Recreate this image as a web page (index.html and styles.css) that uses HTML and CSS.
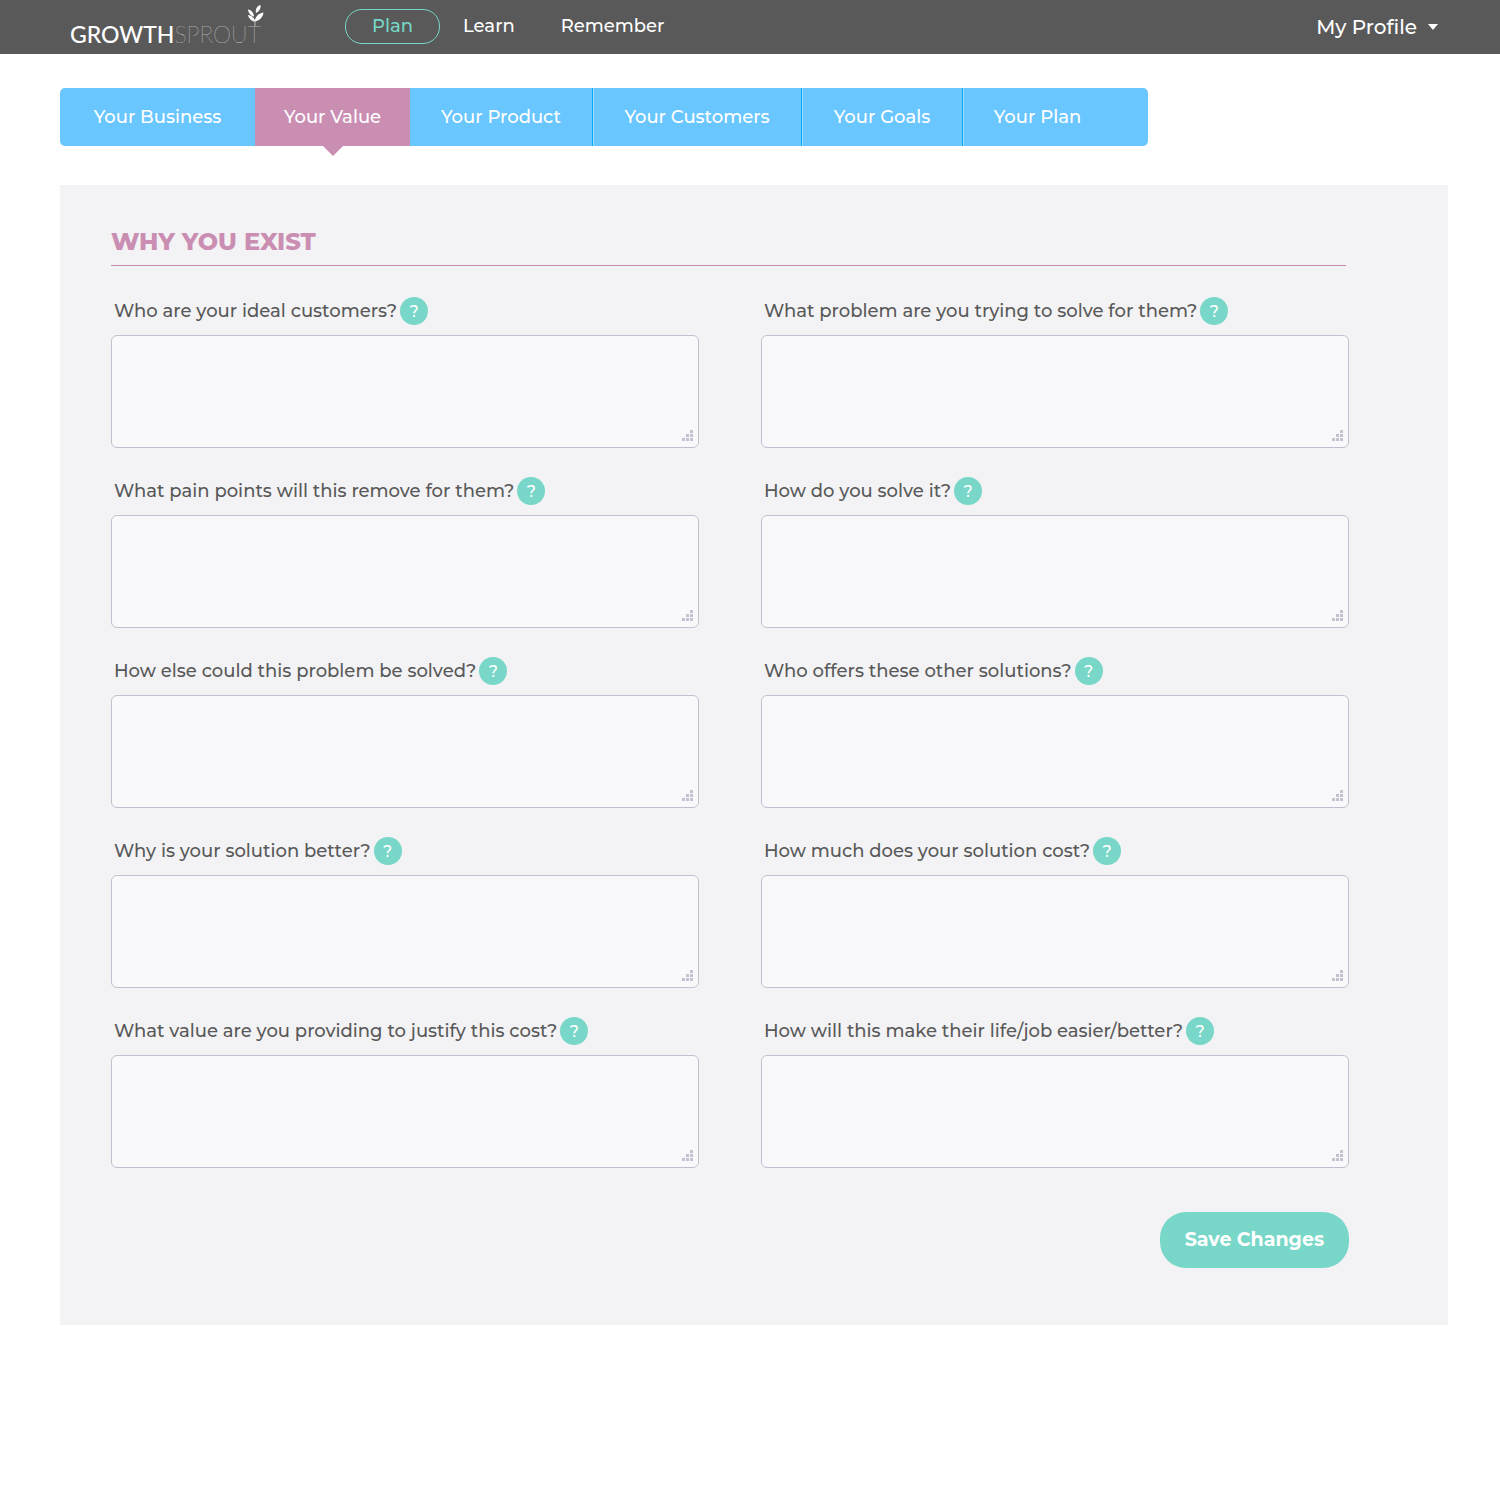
FILE: index.html
```html
<!DOCTYPE html>
<html lang="en">
<head>
    <meta charset="UTF-8">
    <meta name="viewport" content="width=device-width, initial-scale=1.0">
    <title>GrowthSprout - Your Value</title>
    <link rel="stylesheet" href="styles.css">
</head>
<body>

    <!-- Dots shown in the corner of every text box -->
    <svg class="defs" width="0" height="0" aria-hidden="true">
        <symbol id="grip" viewBox="0 0 11 11">
            <path d="M8 0h3v3H8zM4 4h3v3H4zM8 4h3v3H8zM0 8h3v3H0zM4 8h3v3H4zM8 8h3v3H8z"/>
        </symbol>
    </svg>

    <header class="topbar">
        <a href="#" class="logo">
            <span class="logo-bold">GROWTH</span><span class="logo-thin">SPROUT</span>
            <svg class="sprout" viewBox="0 0 18 22" aria-hidden="true">
                <path class="stem" d="M8 22V15"/>
                <path d="M8 17.500C5 17.500 2 15 1 11C5 11.500 7.500 14 8 17.500zM7 12.500C4 12 1.500 9.500 1 5.500C4.500 6 7 9 7 12.500zM9 9C8 5 10 2 13.500 1C14 4 12.500 7.500 9 9zM8 17.500C8 13 11 9.500 16.500 8.500C16 13 13 16.500 8 17.500z"/>
            </svg>
        </a>
        <nav class="main-nav">
            <a href="#" class="active">Plan</a>
            <a href="#">Learn</a>
            <a href="#">Remember</a>
        </nav>
        <button type="button" class="profile">My Profile <span class="caret"></span></button>
    </header>

    <main class="page">
        <nav class="tabs">
            <a href="#">Your Business</a>
            <a href="#" class="current">Your Value</a>
            <a href="#">Your Product</a>
            <a href="#" class="divided">Your Customers</a>
            <a href="#" class="divided">Your Goals</a>
            <a href="#" class="divided last">Your Plan</a>
        </nav>

        <form class="panel">
            <h1>WHY YOU EXIST</h1>

            <div class="questions">
                <div class="question">
                    <div class="question-head">
                        <label for="q1">Who are your ideal customers?</label>
                        <button type="button" class="help">?</button>
                    </div>
                    <div class="box">
                        <textarea id="q1"></textarea>
                        <svg class="grip"><use href="#grip"/></svg>
                    </div>
                </div>
                <div class="question">
                    <div class="question-head">
                        <label for="q2">What problem are you trying to solve for them?</label>
                        <button type="button" class="help">?</button>
                    </div>
                    <div class="box">
                        <textarea id="q2"></textarea>
                        <svg class="grip"><use href="#grip"/></svg>
                    </div>
                </div>
                <div class="question">
                    <div class="question-head">
                        <label for="q3">What pain points will this remove for them?</label>
                        <button type="button" class="help">?</button>
                    </div>
                    <div class="box">
                        <textarea id="q3"></textarea>
                        <svg class="grip"><use href="#grip"/></svg>
                    </div>
                </div>
                <div class="question">
                    <div class="question-head">
                        <label for="q4">How do you solve it?</label>
                        <button type="button" class="help">?</button>
                    </div>
                    <div class="box">
                        <textarea id="q4"></textarea>
                        <svg class="grip"><use href="#grip"/></svg>
                    </div>
                </div>
                <div class="question">
                    <div class="question-head">
                        <label for="q5">How else could this problem be solved?</label>
                        <button type="button" class="help">?</button>
                    </div>
                    <div class="box">
                        <textarea id="q5"></textarea>
                        <svg class="grip"><use href="#grip"/></svg>
                    </div>
                </div>
                <div class="question">
                    <div class="question-head">
                        <label for="q6">Who offers these other solutions?</label>
                        <button type="button" class="help">?</button>
                    </div>
                    <div class="box">
                        <textarea id="q6"></textarea>
                        <svg class="grip"><use href="#grip"/></svg>
                    </div>
                </div>
                <div class="question">
                    <div class="question-head">
                        <label for="q7">Why is your solution better?</label>
                        <button type="button" class="help">?</button>
                    </div>
                    <div class="box">
                        <textarea id="q7"></textarea>
                        <svg class="grip"><use href="#grip"/></svg>
                    </div>
                </div>
                <div class="question">
                    <div class="question-head">
                        <label for="q8">How much does your solution cost?</label>
                        <button type="button" class="help">?</button>
                    </div>
                    <div class="box">
                        <textarea id="q8"></textarea>
                        <svg class="grip"><use href="#grip"/></svg>
                    </div>
                </div>
                <div class="question">
                    <div class="question-head">
                        <label for="q9">What value are you providing to justify this cost?</label>
                        <button type="button" class="help">?</button>
                    </div>
                    <div class="box">
                        <textarea id="q9"></textarea>
                        <svg class="grip"><use href="#grip"/></svg>
                    </div>
                </div>
                <div class="question">
                    <div class="question-head">
                        <label for="q10">How will this make their life/job easier/better?</label>
                        <button type="button" class="help">?</button>
                    </div>
                    <div class="box">
                        <textarea id="q10"></textarea>
                        <svg class="grip"><use href="#grip"/></svg>
                    </div>
                </div>
            </div>

            <div class="actions">
                <button type="submit" class="save">Save Changes</button>
            </div>
        </form>
    </main>

</body>
</html>
```

FILE: styles.css
```css
* {
    box-sizing: border-box;
}
body {
    margin: 0;
    font-family: Montserrat, Inter, sans-serif;
    font-size: 18px;
    font-weight: 500;
    color: #595959;
    background: #fff;
}
a {
    text-decoration: none;
}
button {
    font-family: inherit;
    border: none;
    padding: 0;
    cursor: pointer;
}
.defs {
    position: absolute;
}

/* Top bar */
.topbar {
    display: flex;
    align-items: center;
    height: 54px;
    padding: 0 62px 1px 70px;
    background: #595959;
}
.logo {
    position: relative;
    display: flex;
    width: 195px;
    margin-right: 80px;
    padding-top: 14px;
    font-family: Lato, sans-serif;
    font-size: 23px;
    line-height: 28px;
    color: #fff;
}
.logo-bold {
    font-weight: 500;
}
.logo-thin {
    font-weight: 100;
    color: #eee;
}
.sprout {
    position: absolute;
    right: 0;
    top: -2px;
    width: 18px;
    height: 22px;
    fill: #fff;
}
.stem {
    stroke: #bbb;
    stroke-width: 1;
}
.main-nav {
    display: flex;
    align-items: center;
}
.main-nav a {
    padding: 0 23px;
    line-height: 33px;
    color: #fff;
}
.main-nav .active {
    padding: 0 26px;
    border: 1px solid #76d6c8;
    border-radius: 17px;
    color: #76d6c8;
}
.profile {
    display: flex;
    align-items: center;
    gap: 11px;
    margin-left: auto;
    background: none;
    font-size: 20px;
    font-weight: 500;
    color: #fff;
}
.caret {
    border: 5px solid transparent;
    border-top: 6px solid #fff;
    border-bottom: 0;
}

/* Tabs */
.page {
    padding: 34px 52px 0 60px;
}
.tabs {
    display: grid;
    grid-template-columns: 195fr 155fr 182fr 209fr 161fr 186fr;
    max-width: 1088px;
    border-radius: 5px;
    background: #69c6ff;
}
.tabs a {
    position: relative;
    line-height: 58px;
    text-align: center;
    color: #fff;
}
.tabs .divided {
    border-left: 1px solid #00a9ff;
    box-shadow: inset 1px 0 #9ddaff;
}
.tabs .last {
    padding-right: 36px;
}
.tabs .current {
    background: #cb8eb3;
}
.tabs .current::after {
    content: "";
    position: absolute;
    top: 100%;
    left: 50%;
    margin-left: -10px;
    border: 10px solid transparent;
    border-top-color: #cb8eb3;
    border-bottom: 0;
}

/* Form */
.panel {
    margin-top: 39px;
    padding: 42px 99px 57px 51px;
    background: #f3f3f5;
}
.panel h1 {
    margin: 0 3px 31px 0;
    padding-bottom: 8px;
    border-bottom: 1px solid #cb8eb3;
    font-size: 24px;
    line-height: 30px;
    font-weight: 800;
    color: #cb8eb3;
}
.questions {
    display: grid;
    grid-template-columns: 1fr 1fr;
    gap: 29px 62px;
}
.question-head {
    display: flex;
    align-items: center;
    gap: 3px;
    padding-left: 3px;
    margin-bottom: 10px;
}
.help {
    width: 28px;
    height: 28px;
    border-radius: 50%;
    background: #78d7c8;
    font-size: 16px;
    font-weight: 500;
    color: #fff;
}
.box {
    position: relative;
}
.box textarea {
    display: block;
    width: 100%;
    height: 113px;
    padding: 10px;
    border: 1px solid #c2c0d0;
    border-radius: 6px;
    background: #f9f9fb;
    font: inherit;
    color: inherit;
    resize: none;
}
.grip {
    position: absolute;
    right: 6px;
    bottom: 7px;
    width: 11px;
    height: 11px;
    fill: #c4c2d0;
    pointer-events: none;
}
.actions {
    display: flex;
    justify-content: flex-end;
    margin-top: 44px;
}
.save {
    padding: 0 25px;
    border-radius: 26px;
    background: #78d7c8;
    font-size: 19px;
    line-height: 56px;
    font-weight: 700;
    color: #fff;
}
```
